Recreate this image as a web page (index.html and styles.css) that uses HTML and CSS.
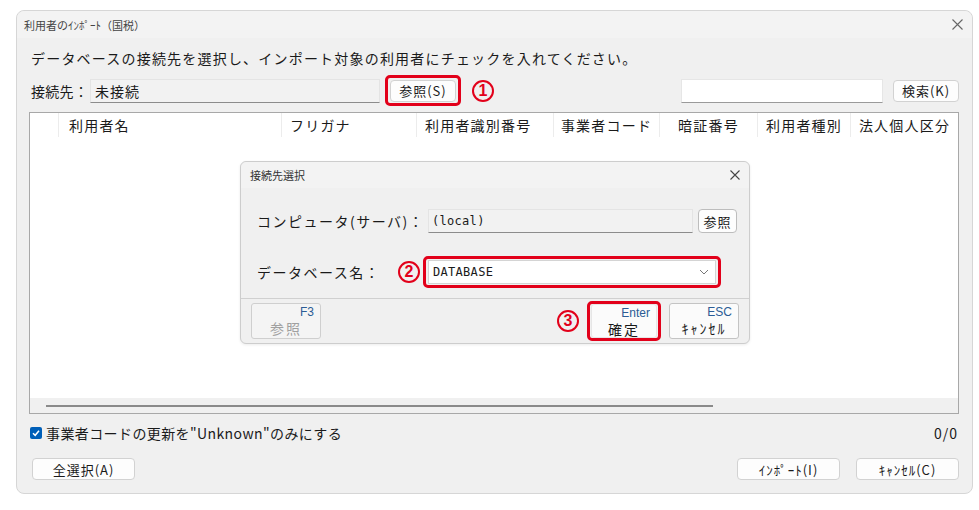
FILE: index.html
```html
<!DOCTYPE html>
<html lang="ja">

<head>
  <meta charset="UTF-8">
  <title>利用者のｲﾝﾎﾟｰﾄ（国税）</title>
  <link rel="stylesheet" href="styles.css">
</head>

<body>
  <div class="window">
    <div class="titlebar">
      <span>利用者のｲﾝﾎﾟｰﾄ（国税）</span>
      <svg class="close" width="11" height="11" viewBox="0 0 11 11">
        <path d="M0.5 0.5 L10.5 10.5 M10.5 0.5 L0.5 10.5" stroke="#666" stroke-width="1.1" />
      </svg>
    </div>

    <div class="content">
      <p class="guide">データベースの接続先を選択し、インポート対象の利用者にチェックを入れてください。</p>

      <div class="conn-row">
        <span class="label">接続先：</span>
        <div class="field conn-field">未接続</div>
        <div class="mark-box">
          <button class="btn btn-ref">参照(S)</button>
        </div>
        <span class="num">1</span>
        <div class="spacer"></div>
        <div class="field search-field"></div>
        <button class="btn btn-search">検索(K)</button>
      </div>

      <div class="list">
        <div class="list-head">
          <div class="col"></div>
          <div class="col">利用者名</div>
          <div class="col">フリガナ</div>
          <div class="col">利用者識別番号</div>
          <div class="col center">事業者コード</div>
          <div class="col center">暗証番号</div>
          <div class="col center">利用者種別</div>
          <div class="col center">法人個人区分</div>
        </div>
        <div class="list-body"></div>
        <div class="hscroll">
          <div class="thumb"></div>
        </div>
      </div>

      <div class="option-row">
        <label class="check">
          <span class="box">
            <svg width="10" height="10" viewBox="0 0 10 10">
              <path d="M2 5.2 L4.2 7.3 L8 2.8" fill="none" stroke="#fff" stroke-width="1.5" />
            </svg>
          </span>
          事業者コードの更新を"Unknown"のみにする
        </label>
        <span class="count">0/0</span>
      </div>

      <div class="bottom-row">
        <button class="btn btn-wide">全選択(A)</button>
        <div class="spacer"></div>
        <button class="btn btn-wide">ｲﾝﾎﾟｰﾄ(I)</button>
        <button class="btn btn-wide">ｷｬﾝｾﾙ(C)</button>
      </div>
    </div>

    <!-- 接続先選択ダイアログ -->
    <div class="dialog">
      <div class="dlg-title">
        <span>接続先選択</span>
        <svg class="close" width="10" height="10" viewBox="0 0 10 10">
          <path d="M0.5 0.5 L9.5 9.5 M9.5 0.5 L0.5 9.5" stroke="#444" stroke-width="1.1" />
        </svg>
      </div>
      <div class="dlg-body">
        <div class="dlg-row">
          <span class="dlg-label">コンピュータ(サーバ)：</span>
          <div class="field server-field mono">(local)</div>
          <button class="btn btn-small">参照</button>
        </div>
        <div class="dlg-row">
          <span class="dlg-label">データベース名：</span>
          <span class="num num-2">2</span>
          <div class="mark-box db-box">
            <div class="select">
              <span class="mono">DATABASE</span>
              <svg width="10" height="6" viewBox="0 0 10 6">
                <path d="M1 1 L5 5 L9 1" fill="none" stroke="#777" stroke-width="1" />
              </svg>
            </div>
          </div>
        </div>
      </div>
      <div class="dlg-foot">
        <button class="fkey" disabled><span class="key">F3</span><span class="cap">参照</span></button>
        <div class="spacer"></div>
        <span class="num">3</span>
        <div class="mark-box enter-box">
          <button class="fkey"><span class="key">Enter</span><span class="cap">確定</span></button>
        </div>
        <button class="fkey"><span class="key">ESC</span><span class="cap">ｷｬﾝｾﾙ</span></button>
      </div>
    </div>
  </div>
</body>

</html>
```

FILE: styles.css
```css
body {
  margin: 0;
  background-color: #fff;
  font-family: "Noto Sans CJK JP", "Noto Sans", sans-serif;
  color: #1a1a1a;
}

.window {
  position: relative;
  box-sizing: border-box;
  width: 957px;
  height: 484px;
  margin: 10px 0 0 16px;
  border: 1px solid #d6d6d6;
  border-radius: 8px;
  background-color: #f0f0f0;
}

.titlebar {
  height: 27px;
  display: flex;
  align-items: center;
  justify-content: space-between;
  padding: 0 9px 0 7px;
  font-size: 11px;
  color: #444;
  background-color: #f3f3f3;
  border-radius: 8px 8px 0 0;
}

.guide {
  margin: 10px 0 0 1px;
  font-size: 14px;
  line-height: 20px;
  letter-spacing: 1.2px;
}

.content {
  padding: 0 13px;
}

.conn-row {
  display: flex;
  align-items: center;
  height: 31px;
  margin-top: 7px;
}

.label {
  width: 59px;
  padding-left: 1px;
  font-size: 14px;
  letter-spacing: 0.3px;
  white-space: nowrap;
}

.field {
  box-sizing: border-box;
  height: 24px;
  display: flex;
  align-items: center;
  padding-left: 4px;
  font-size: 14px;
  letter-spacing: 1px;
}

.conn-field {
  width: 290px;
  background-color: #f2f2f2;
  border: 1px solid #e4e4e4;
  border-bottom-color: #8c8c8c;
}

.mark-box {
  box-sizing: border-box;
  display: flex;
  align-items: center;
  justify-content: center;
  border: 3px solid #e2001a;
  border-radius: 5px;
}

.conn-row .mark-box {
  width: 76px;
  height: 31px;
  margin-left: 5px;
}

.btn {
  box-sizing: border-box;
  height: 22px;
  padding: 0;
  border: 1px solid #d2d2d2;
  border-radius: 4px;
  background-color: #fdfdfd;
  font-family: inherit;
  font-size: 13px;
  letter-spacing: 1px;
  color: #1a1a1a;
}

.btn-ref {
  width: 66px;
}

.num {
  box-sizing: border-box;
  width: 22px;
  height: 22px;
  display: flex;
  align-items: center;
  justify-content: center;
  border: 2px solid #e2001a;
  border-radius: 50%;
  color: #e2001a;
  font-family: "Liberation Sans", sans-serif;
  font-weight: bold;
  font-size: 16px;
}

.conn-row .num {
  margin-left: 11px;
}

.spacer {
  flex: 1;
}

.search-field {
  width: 202px;
  background-color: #fff;
  border: 1px solid #e6e6e6;
  border-bottom-color: #9a9a9a;
}

.btn-search {
  width: 66px;
  margin-left: 10px;
}

.list {
  box-sizing: border-box;
  height: 302px;
  margin-top: 6px;
  margin-left: -1px;
  border: 1px solid #a8a8a8;
  background-color: #fff;
  display: flex;
  flex-direction: column;
}

.list-head {
  display: grid;
  grid-template-columns: 29px 223px 135px 137px 106px 98px 93px 1fr;
  height: 24px;
  font-size: 14px;
  letter-spacing: 1.2px;
}

.col {
  display: flex;
  align-items: center;
  padding-left: 8px;
  border-right: 1px solid #ececec;
  white-space: nowrap;
}

.col:nth-child(2) {
  padding-left: 10px;
}

.col:last-child {
  border-right: none;
}

.col.center {
  justify-content: center;
  padding-left: 0;
}

.list-body {
  flex: 1;
}

.hscroll {
  height: 15px;
  background-color: #f0f0f0;
  display: flex;
  align-items: center;
  padding-left: 16px;
}

.thumb {
  width: 667px;
  height: 2px;
  background-color: #8a8a8a;
}

.option-row {
  display: flex;
  align-items: center;
  justify-content: space-between;
  height: 20px;
  margin-top: 9px;
}

.check {
  display: flex;
  align-items: center;
  font-size: 14px;
  letter-spacing: 0.4px;
}

.box {
  width: 12px;
  height: 12px;
  margin-right: 4px;
  border-radius: 2px;
  background-color: #005fb8;
  display: flex;
  align-items: center;
  justify-content: center;
}

.count {
  font-size: 14px;
  letter-spacing: 1px;
  margin-right: 1px;
}

.bottom-row {
  display: flex;
  align-items: center;
  margin-top: 15px;
  padding-left: 2px;
}

.btn-wide {
  width: 103px;
}

.bottom-row .btn-wide + .btn-wide {
  margin-left: 16px;
}

/* dialog */
.dialog {
  position: absolute;
  left: 223px;
  top: 150px;
  box-sizing: border-box;
  width: 510px;
  height: 183px;
  border: 1px solid #cdcdcd;
  border-radius: 6px;
  background-color: #f0f0f0;
  box-shadow: 0 1px 3px rgba(0, 0, 0, 0.08);
}

.dlg-title {
  height: 26px;
  display: flex;
  align-items: center;
  justify-content: space-between;
  padding: 0 9px 0 9px;
  font-size: 11px;
  color: #333;
  background-color: #f3f3f3;
  border-radius: 6px 6px 0 0;
}

.dlg-body {
  height: 110px;
  padding: 17px 0 0 16px;
  box-sizing: border-box;
}

.dlg-row {
  display: flex;
  align-items: center;
  height: 32px;
}

.dlg-row + .dlg-row {
  margin-top: 19px;
}

.dlg-label {
  width: 171px;
  font-size: 14px;
  letter-spacing: 1.5px;
}

.server-field {
  width: 265px;
  background-color: #f2f2f2;
  border: 1px solid #e4e4e4;
  border-bottom-color: #8c8c8c;
  padding-left: 3px;
}

.mono {
  font-family: "DejaVu Sans Mono", monospace;
  font-size: 12px;
  letter-spacing: 0.3px;
}

.btn-small {
  width: 39px;
  height: 24px;
  margin-left: 5px;
  border-color: #bdbdbd;
}

.num-2 {
  margin-left: -30px;
  margin-right: 3px;
}

.db-box {
  width: 298px;
  height: 32px;
}

.select {
  box-sizing: border-box;
  width: 288px;
  height: 24px;
  display: flex;
  align-items: center;
  justify-content: space-between;
  padding: 0 6px 0 4px;
  background-color: #fff;
  border: 1px solid #d4d4d4;
}

.dlg-foot {
  box-sizing: border-box;
  height: 45px;
  display: flex;
  align-items: center;
  padding: 0 10px;
  border-top: 1px solid #d0d0d0;
}

.fkey {
  box-sizing: border-box;
  width: 70px;
  height: 36px;
  padding: 1px 6px 0 0;
  display: flex;
  flex-direction: column;
  border: 1px solid #c4c4c4;
  border-radius: 3px;
  background-color: #fbfbfb;
  font-family: inherit;
  color: #1a1a1a;
}

.fkey .key {
  align-self: flex-end;
  font-size: 12px;
  line-height: 14px;
  color: #2b5c95;
  font-family: "Liberation Sans", sans-serif;
}

.fkey .cap {
  align-self: center;
  padding-left: 6px;
  font-size: 14px;
  line-height: 18px;
  letter-spacing: 2px;
}

.fkey:disabled {
  background-color: #f4f4f4;
  border-color: #cfcfcf;
}

.fkey:disabled .cap {
  color: #a0a0a0;
}

.dlg-foot .num {
  margin-right: 8px;
}

.enter-box {
  width: 74px;
  height: 40px;
  margin-right: 8px;
}

.enter-box .fkey {
  width: 66px;
  height: 34px;
  border-color: #e6e6e6;
}
```
